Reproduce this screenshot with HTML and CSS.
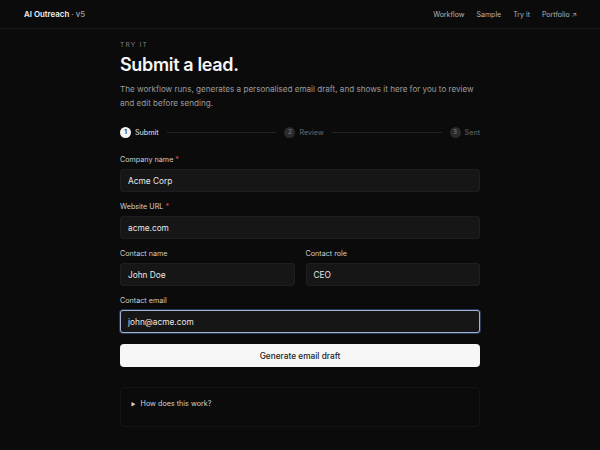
FILE: index.html
```html
<!DOCTYPE html>
<html>
<head>
<meta charset="utf-8">
<link rel="stylesheet" href="styles.css">
</head>
<body>
<header class="topbar">
  <div class="brand">AI Outreach <span class="ver">· v5</span></div>
  <nav class="nav">
    <a>Workflow</a>
    <a>Sample</a>
    <a>Try it</a>
    <a>Portfolio ↗</a>
  </nav>
</header>
<main class="wrap">
  <div class="eyebrow">TRY IT</div>
  <h1 class="title">Submit a lead.</h1>
  <p class="lede">The workflow runs, generates a personalised email draft, and shows it here for you to review and edit before sending.</p>

  <div class="steps">
    <div class="step active"><span class="dot">1</span><span class="slabel">Submit</span></div>
    <div class="line"></div>
    <div class="step"><span class="dot">2</span><span class="slabel">Review</span></div>
    <div class="line"></div>
    <div class="step"><span class="dot">3</span><span class="slabel">Sent</span></div>
  </div>

  <div class="field">
    <label class="lbl">Company name <span class="req">*</span></label>
    <div class="input">Acme Corp</div>
  </div>
  <div class="field">
    <label class="lbl">Website URL <span class="req">*</span></label>
    <div class="input">acme.com</div>
  </div>
  <div class="row">
    <div class="field">
      <label class="lbl">Contact name</label>
      <div class="input">John Doe</div>
    </div>
    <div class="field">
      <label class="lbl">Contact role</label>
      <div class="input">CEO</div>
    </div>
  </div>
  <div class="field">
    <label class="lbl">Contact email</label>
    <div class="input focus">john@acme.com</div>
  </div>
  <button class="btn">Generate email draft</button>

  <div class="details">
    <div class="summary"><span class="tri">▶</span>How does this work?</div>
  </div>
</main>
</body>
</html>
```

FILE: styles.css
```css
* { box-sizing: border-box; }
html, body { margin: 0; padding: 0; }
body {
  background: #0b0b0c;
  color: #ececec;
  font-family: Inter, "Liberation Sans", sans-serif;
  height: 450px;
  overflow: hidden;
}
.topbar {
  height: 29px;
  border-bottom: 1px solid #1b1b1d;
  display: flex;
  align-items: center;
  justify-content: space-between;
  padding: 0 23px 0 24px;
}
.brand { font-size: 7.9px; font-weight: 600; color: #f2f2f2; }
.ver { color: #a0a0a0; font-weight: 500; }
.nav { display: flex; gap: 12px; font-size: 7px; color: #b5b5b5; }
.wrap { width: 360px; margin: 0 auto; padding-top: 11px; }
.eyebrow { font-size: 6.6px; letter-spacing: 1.2px; color: #7d7d7d; line-height: 10px; }
.title {
  font-size: 18px; font-weight: 600; letter-spacing: -0.35px;
  margin: 4px 0 0; line-height: 22px; color: #f5f5f5;
}
.lede {
  font-size: 8.1px; line-height: 14px; color: #9c9c9c;
  margin: 6px 0 0;
}
.steps {
  display: flex; align-items: center; margin-top: 16px; height: 12px;
}
.step { display: flex; align-items: center; gap: 4px; font-size: 7.2px; color: #6b6b6b; }
.dot {
  width: 11px; height: 11px; border-radius: 50%;
  background: #2a2a2b; color: #6b6b6b;
  display: flex; align-items: center; justify-content: center;
  font-size: 6.3px; font-weight: 600;
}
.step.active { color: #e6e6e6; }
.step.active .dot { background: #f5f5f5; color: #111; }
.line { flex: 1; height: 1px; background: #232325; margin: 0 8px; }
.field { margin-top: 10px; display: flex; flex-direction: column; }
.steps + .field { margin-top: 17px; }
.lbl { font-size: 7.2px; color: #cfcfcf; line-height: 10px; margin-bottom: 4px; }
.req { color: #e05555; }
.input {
  height: 23px; border-radius: 3px; background: #161617;
  border: 1px solid #1f1f21; font-size: 8.3px; color: #e8e8e8;
  display: flex; align-items: center; padding: 0 7px;
}
.input.focus {
  border-color: #9fb3d8;
  box-shadow: 0 0 0 1px rgba(80,110,170,0.45);
}
.row { display: grid; grid-template-columns: 1fr 1fr; gap: 11px; }
.btn {
  display: block; width: 100%; margin-top: 11px; height: 23px;
  border: 0; border-radius: 4px; background: #f7f7f7; color: #222;
  font-family: inherit; font-size: 8.3px; font-weight: 500;
}
.details {
  margin-top: 20px; border: 1px solid #141415; border-radius: 4px;
  height: 40px; padding: 11px 10px 0;
}
.summary { font-size: 7.2px; color: #d0d0d0; display: flex; align-items: center; }
.tri { font-size: 5px; margin-right: 5px; }
```
